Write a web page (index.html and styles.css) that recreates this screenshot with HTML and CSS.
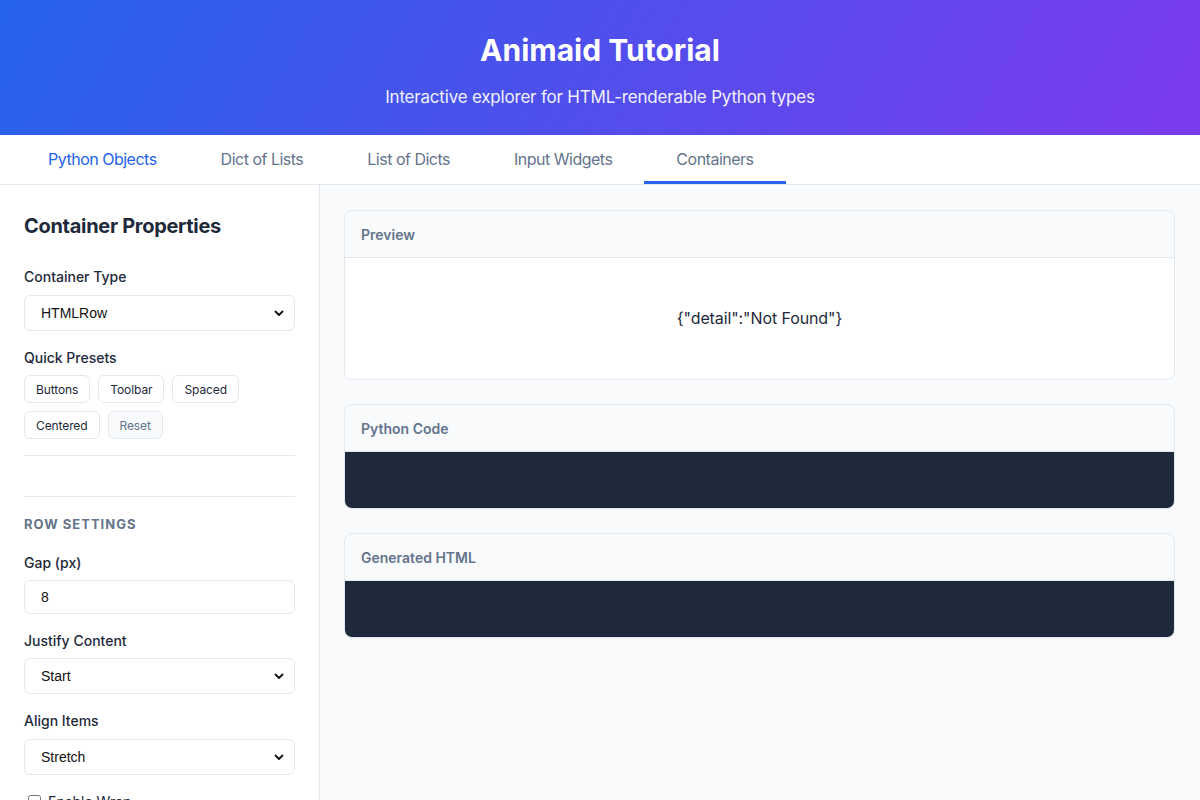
FILE: index.html
```html
<!DOCTYPE html>
<html lang="en">
<head>
  <meta charset="UTF-8">
  <meta name="viewport" content="width=device-width, initial-scale=1.0">
  <title>Animaid Tutorial</title>
  <link rel="stylesheet" href="styles.css">
</head>
<body>
  <div class="header">
    <h1>Animaid Tutorial</h1>
    <p>Interactive explorer for HTML-renderable Python types</p>
  </div>

  <nav class="tabs">
    <button class="tab tab-link">Python Objects</button>
    <button class="tab">Dict of Lists</button>
    <button class="tab">List of Dicts</button>
    <button class="tab">Input Widgets</button>
    <button class="tab active">Containers</button>
  </nav>

  <div class="layout">
    <aside class="sidebar">
      <div class="section">
        <h2 class="sidebar-title">Container Properties</h2>
        <div class="field">
          <label for="containerType" class="first-label">Container Type</label>
          <div class="select-wrap">
            <select id="containerType">
              <option>HTMLRow</option>
              <option>HTMLColumn</option>
              <option>HTMLGrid</option>
            </select>
            <svg class="chevron" width="10" height="7" viewBox="0 0 10 7"><path d="M1.5 1.5 L5 5 L8.5 1.5" fill="none" stroke="#111" stroke-width="1.8" stroke-linecap="round" stroke-linejoin="round"/></svg>
          </div>
        </div>
        <div class="field">
          <label>Quick Presets</label>
          <div class="presets">
            <button class="preset">Buttons</button>
            <button class="preset">Toolbar</button>
            <button class="preset">Spaced</button>
            <button class="preset">Centered</button>
            <button class="preset preset-reset">Reset</button>
          </div>
        </div>
      </div>

      <div class="section section-settings">
        <h3 class="settings-title">Row Settings</h3>
        <div class="field">
          <label for="gap">Gap (px)</label>
          <input type="text" id="gap" value="8">
        </div>
        <div class="field">
          <label for="justify">Justify Content</label>
          <div class="select-wrap">
            <select id="justify">
              <option>Start</option>
              <option>Center</option>
              <option>End</option>
            </select>
            <svg class="chevron" width="10" height="7" viewBox="0 0 10 7"><path d="M1.5 1.5 L5 5 L8.5 1.5" fill="none" stroke="#111" stroke-width="1.8" stroke-linecap="round" stroke-linejoin="round"/></svg>
          </div>
        </div>
        <div class="field">
          <label for="align" class="first-label">Align Items</label>
          <div class="select-wrap">
            <select id="align">
              <option>Stretch</option>
              <option>Start</option>
              <option>Center</option>
            </select>
            <svg class="chevron" width="10" height="7" viewBox="0 0 10 7"><path d="M1.5 1.5 L5 5 L8.5 1.5" fill="none" stroke="#111" stroke-width="1.8" stroke-linecap="round" stroke-linejoin="round"/></svg>
          </div>
        </div>
        <label class="check">
          <input type="checkbox" id="wrap">
          <span>Enable Wrap</span>
        </label>
      </div>
    </aside>

    <main class="main">
      <div class="card">
        <div class="card-header">Preview</div>
        <div class="preview-body">{"detail":"Not Found"}</div>
      </div>
      <div class="card">
        <div class="card-header">Python Code</div>
        <pre class="code-body"></pre>
      </div>
      <div class="card">
        <div class="card-header">Generated HTML</div>
        <pre class="code-body"></pre>
      </div>
    </main>
  </div>
</body>
</html>
```

FILE: styles.css
```css
* {
  margin: 0;
  padding: 0;
  box-sizing: border-box;
}

body {
  font-family: Inter, "Noto Sans", sans-serif;
  background: #f8fafc;
  color: #1e293b;
}

.header {
  background: linear-gradient(120deg, #2563eb 0%, #7c3aed 100%);
  color: white;
  text-align: center;
  padding: 32px 20px 25px;
  height: 135px;
}

.header h1 {
  font-size: 30px;
  font-weight: 700;
  line-height: 36px;
  margin-bottom: 16px;
}

.header p {
  font-size: 17px;
  line-height: 26px;
  letter-spacing: -0.2px;
  opacity: 0.92;
}

.tabs {
  display: flex;
  background: white;
  border-bottom: 1px solid #e2e8f0;
  padding-left: 16px;
}

.tab {
  background: none;
  border: none;
  border-bottom: 3px solid transparent;
  padding: 14px 32px 12px;
  font-family: inherit;
  font-size: 16px;
  line-height: 20px;
  letter-spacing: -0.5px;
  color: #64748b;
  cursor: pointer;
}

.tab-link {
  color: #2563eb;
}

.tab.active {
  border-bottom-color: #2563eb;
}

.layout {
  display: flex;
  align-items: stretch;
}

.sidebar {
  width: 320px;
  flex-shrink: 0;
  background: white;
  border-right: 1px solid #e2e8f0;
  padding: 25px 24px 24px;
  min-height: 700px;
}

.sidebar-title {
  font-size: 20px;
  font-weight: 700;
  line-height: 32px;
  letter-spacing: -0.3px;
  margin-bottom: 25px;
  color: #1e293b;
}

.section {
  padding-bottom: 16px;
  border-bottom: 1px solid #e2e8f0;
}

.section-settings {
  margin-top: 40px;
  padding-top: 18px;
  border-top: 1px solid #e2e8f0;
  border-bottom: none;
}

.field {
  margin-bottom: 17px;
}

.section .field:last-child {
  margin-bottom: 0;
}

.field label {
  display: block;
  font-size: 14px;
  font-weight: 500;
  line-height: 20px;
  margin-bottom: 7px;
  color: #1e293b;
}

.field .first-label {
  margin-bottom: 8px;
}

.select-wrap {
  position: relative;
}

select,
input[type="text"] {
  width: 100%;
  font-family: "Liberation Sans", Arial, sans-serif;
  font-size: 14px;
  color: #111;
  background: white;
  border: 1px solid #e2e8f0;
  border-radius: 6px;
}

select {
  appearance: none;
  -webkit-appearance: none;
  height: 36px;
  padding: 0 16px;
}

input[type="text"] {
  height: 34px;
  padding: 0 16px;
}

.chevron {
  position: absolute;
  right: 11px;
  top: 15px;
  pointer-events: none;
}

.presets {
  display: flex;
  flex-wrap: wrap;
  gap: 8px;
  width: 230px;
}

.preset {
  height: 28px;
  padding: 0 11px;
  font-family: inherit;
  font-size: 12px;
  letter-spacing: -0.1px;
  color: #1e293b;
  background: white;
  border: 1px solid #e2e8f0;
  border-radius: 6px;
  cursor: pointer;
}

.preset-reset {
  background: #f8fafc;
  color: #64748b;
}

.settings-title {
  font-size: 13px;
  font-weight: 700;
  line-height: 18px;
  text-transform: uppercase;
  letter-spacing: 1px;
  color: #64748b;
  margin-bottom: 20px;
}

.check {
  display: flex;
  align-items: center;
  gap: 4px;
  font-size: 14px;
  margin-top: 17px;
}

.check input {
  margin: 3px 3px 3px 4px;
}

.main {
  flex: 1;
  padding: 25px 25px 24px 24px;
  display: flex;
  flex-direction: column;
  gap: 24px;
}

.card {
  background: #f8fafc;
  border: 1px solid #e2e8f0;
  border-radius: 8px;
  overflow: hidden;
}

.card-header {
  height: 47px;
  padding: 0 16px;
  display: flex;
  align-items: center;
  font-size: 14px;
  font-weight: 600;
  color: #64748b;
  border-bottom: 1px solid #e2e8f0;
}

.preview-body {
  background: white;
  text-align: center;
  font-size: 16px;
  line-height: 24px;
  letter-spacing: -0.1px;
  padding: 48px 16px 47px;
  color: #1e293b;
  height: 121px;
}

.code-body {
  background: #1e293b;
  height: 56px;
  margin: 0;
}
```
